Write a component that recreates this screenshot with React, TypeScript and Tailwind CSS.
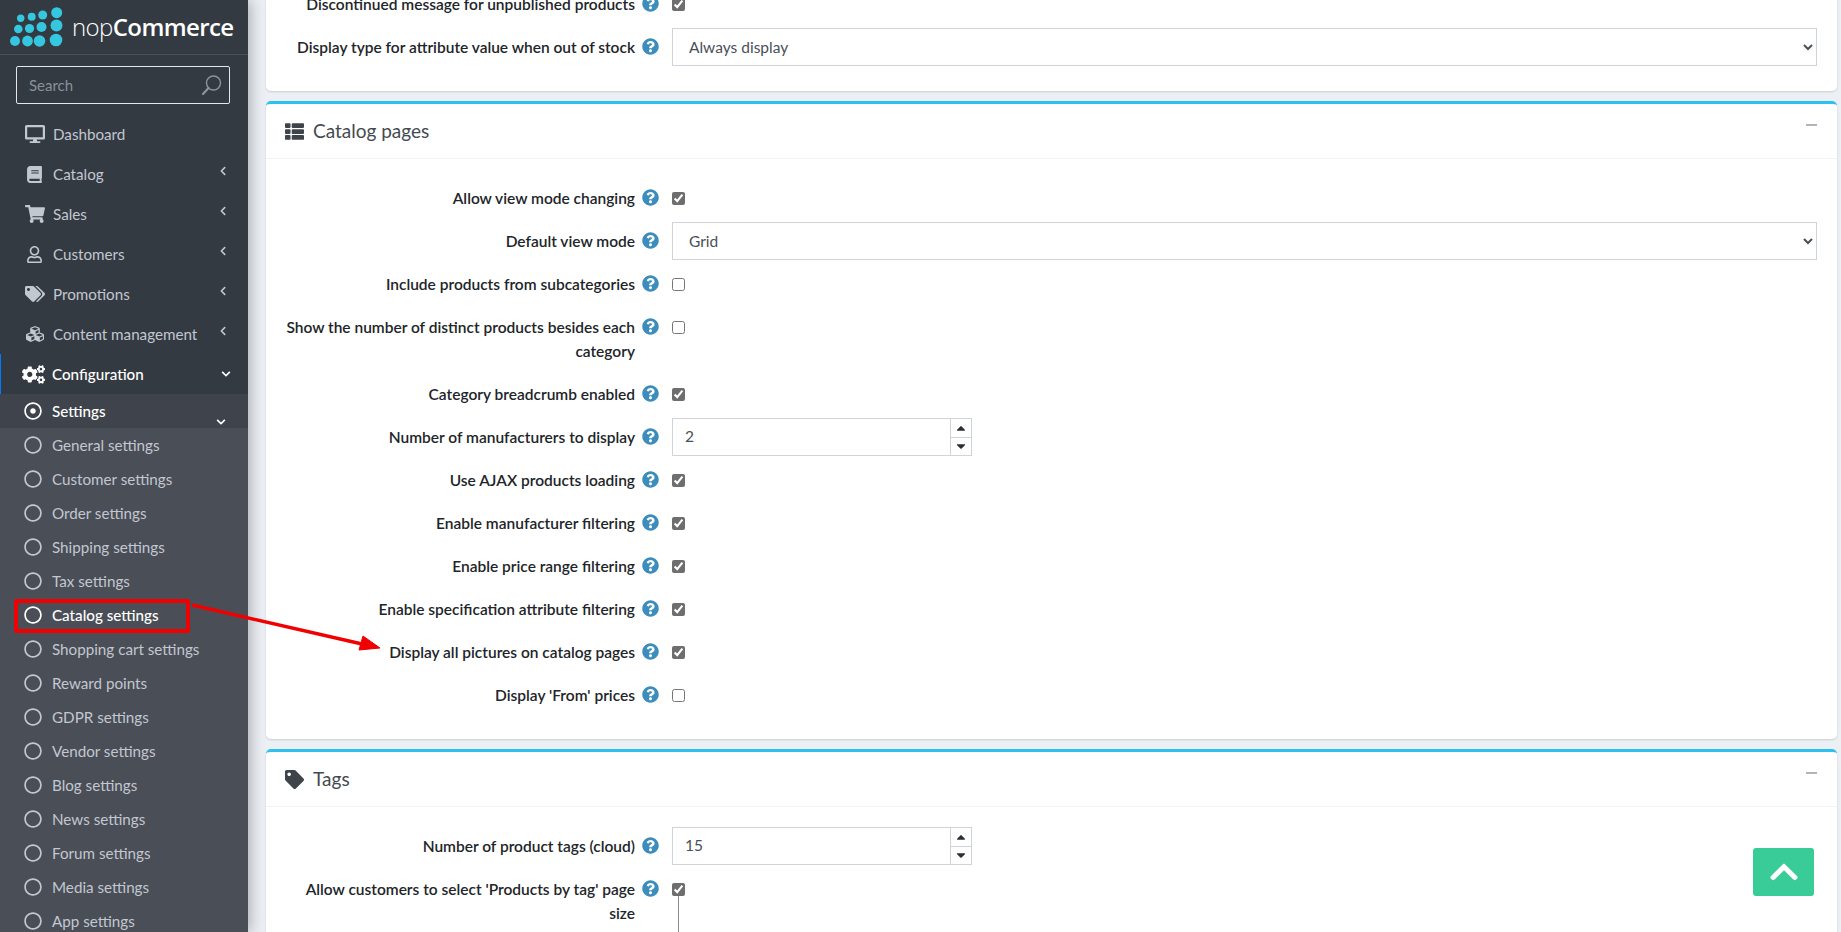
import { FaDesktop, FaBook, FaShoppingCart, FaRegUser, FaTags, FaCubes, FaCogs, FaRegDotCircle, FaRegCircle, FaThList, FaTag, FaQuestionCircle, FaChevronUp, FaChevronLeft, FaChevronDown, FaCaretUp, FaCaretDown } from "react-icons/fa";

const font = "font-['Lato','Noto_Sans',sans-serif]";

function Logo() {
  const dots: [number, number, number][] = [
    [20.7, 18.3, 3.7], [31.7, 16.7, 4], [42.7, 15, 4.5], [56.7, 12.7, 5.5],
    [18.3, 29, 4.3], [29.5, 28.5, 4.6], [41.5, 27, 5], [56.5, 25.5, 6],
    [15, 41, 5], [27.5, 41, 5.4], [39.5, 41, 5.8], [56, 40, 6.3],
  ];
  return (
    <div className="h-[55px] flex items-center border-b border-[#4b5057] relative">
      <svg width="64" height="55" viewBox="0 0 64 55" className="shrink-0">
        {dots.map((d, i) => <circle key={i} cx={d[0]} cy={d[1]} r={d[2]} fill="#35c6e0" />)}
      </svg>
      <span className="ml-[8px] text-[24px] leading-none text-white tracking-[-0.6px] font-['Open_Sans',sans-serif] font-light">nop<span className="font-semibold">Commerce</span></span>
    </div>
  );
}

function SearchBox() {
  return (
    <div className="ml-[16px] mr-[18px] mt-[11px] h-[38px] border border-[#e4e6e8] rounded-[2px] flex items-center pl-[12px] pr-[6px]">
      <span className="flex-1 text-[15px] text-[#8a9099]">Search</span>
      <svg width="22" height="22" viewBox="0 0 22 22" fill="none" stroke="#8f9499">
        <circle cx="12.5" cy="9" r="7" strokeWidth="1.4" />
        <path d="M7.5 14 L2 20" strokeWidth="2.2" strokeLinecap="round" />
      </svg>
    </div>
  );
}

function TopItem({ icon, label, arrow }: { icon: React.ReactNode; label: string; arrow?: boolean }) {
  return (
    <div className="h-[40px] flex items-center text-[#c2c7d0]">
      <span className="w-[53px] flex justify-center pl-[23px] pr-[7px] text-[20px] shrink-0">{icon}</span>
      <span className="flex-1 text-[15.2px]">{label}</span>
      {arrow && <FaChevronLeft className="text-[10px] mr-[20px] mb-[6px]" />}
    </div>
  );
}

const subs = ["General settings", "Customer settings", "Order settings", "Shipping settings", "Tax settings", "Catalog settings", "Shopping cart settings", "Reward points", "GDPR settings", "Vendor settings", "Blog settings", "News settings", "Forum settings", "Media settings", "App settings"];

function Sidebar() {
  return (
    <aside className={`w-[248px] shrink-0 h-[932px] overflow-hidden bg-[#343a42] relative z-10 shadow-[2px_0_14px_rgba(0,0,0,0.3)] ${font}`}>
      <Logo />
      <SearchBox />
      <div className="mt-[10px]">
        <TopItem icon={<FaDesktop />} label="Dashboard" />
        <TopItem icon={<FaBook className="text-[17px]" />} label="Catalog" arrow />
        <TopItem icon={<FaShoppingCart />} label="Sales" arrow />
        <TopItem icon={<FaRegUser className="text-[17px]" />} label="Customers" arrow />
        <TopItem icon={<FaTags />} label="Promotions" arrow />
        <TopItem icon={<FaCubes className="text-[18px]" />} label="Content management" arrow />
        <div className="h-[40px] flex items-center text-white border-l-[1px] border-[#007bff]">
          <span className="w-[51px] pl-[21px] text-[23px] shrink-0"><FaCogs /></span>
          <span className="flex-1 text-[15.2px] font-medium">Configuration</span>
          <FaChevronDown className="text-[10px] mr-[17px]" />
        </div>
        <div className="h-[34px] bg-[#3f444c] flex items-center text-white">
          <span className="w-[52px] pl-[24px] text-[18px] shrink-0"><FaRegDotCircle /></span>
          <span className="flex-1 text-[15.2px] font-medium">Settings</span>
          <FaChevronDown className="text-[10px] mr-[22px] mt-[22px]" />
        </div>
        <div className="bg-[#4a4e57]">
          {subs.map((s) => {
            const on = s === "Catalog settings";
            return (
              <div key={s} className={`h-[34px] flex items-center ${on ? "text-white font-medium" : "text-[#c2c7d0]"}`}>
                <span className="w-[52px] pl-[24px] text-[18px] shrink-0"><FaRegCircle /></span>
                <span className="text-[15.2px]">{s}</span>
              </div>
            );
          })}
        </div>
      </div>
    </aside>
  );
}

function Help() {
  return <FaQuestionCircle className="text-[#3d8dbc] text-[17px] shrink-0 mt-[3px]" />;
}

function Check({ on }: { on?: boolean }) {
  return <input type="checkbox" checked={!!on} readOnly className="w-[13px] h-[13px] mt-[6px] accent-[#6e6e6e] block" />;
}

function Row({ label, children }: { label: string; children: React.ReactNode }) {
  return (
    <div className="flex mb-[5px] min-h-[38px] pl-[15px]">
      <div className="w-[354px] pt-[7px] pb-[7px] text-right text-[15.5px] leading-[24px] font-semibold text-[#212529] shrink-0">{label}</div>
      <div className="w-[37px] pl-[7px] pt-[7px] shrink-0"><Help /></div>
      <div className="flex-1 pt-[7px] pr-[20px]">{children}</div>
    </div>
  );
}

function Select({ value }: { value: string }) {
  return (
    <select defaultValue={value} className="w-full h-[38px] -mt-[7px] block bg-white border border-[#ced4da] px-[12px] text-[15.5px] text-[#495057] rounded-none">
      <option>{value}</option>
    </select>
  );
}

function NumberBox({ value }: { value: string }) {
  return (
    <div className="w-[300px] h-[38px] -mt-[7px] border border-[#ced4da] flex text-[15.5px] text-[#495057]">
      <div className="flex-1 flex items-center pl-[12px]">{value}</div>
      <div className="w-[21px] border-l border-[#ced4da] flex flex-col text-[#2b2f33]">
        <div className="flex-1 flex items-center justify-center border-b border-[#ced4da]"><FaCaretUp className="text-[14px]" /></div>
        <div className="flex-1 flex items-center justify-center"><FaCaretDown className="text-[14px]" /></div>
      </div>
    </div>
  );
}

function CardHeader({ icon, title }: { icon: React.ReactNode; title: string }) {
  return (
    <div className="h-[55px] border-b border-[#f1f2f4] flex items-center pl-[19px] pr-[20px]">
      <span className="w-[28px] text-[19px] text-[#3f444a] shrink-0">{icon}</span>
      <span className="flex-1 text-[19px] text-[#444a50]">{title}</span>
      <span className="w-[11px] h-[2px] bg-[#b0b5bd] -mt-[12px]" />
    </div>
  );
}

function Card({ children, header }: { children: React.ReactNode; header?: React.ReactNode }) {
  return (
    <section className={`bg-white shadow-[0_1px_2px_rgba(0,0,0,0.15)] rounded-[5px] mb-[10px] ${header ? "border-t-[3px] border-[#2ec1ee]" : "rounded-t-none"}`}>
      {header}
      <div className={header ? "pt-[20px] pb-[20px]" : "pb-[20px]"}>{children}</div>
    </section>
  );
}

export default function App() {
  return (
    <div className={`h-[932px] w-[1841px] overflow-hidden flex bg-[#ecf0f5] relative ${font}`}>
      <Sidebar />
      <main className="flex-1 pl-[18px] pr-[4px] -mt-[15px] min-w-0">
        <Card>
          <Row label="Discontinued message for unpublished products"><Check on /></Row>
          <Row label="Display type for attribute value when out of stock"><Select value="Always display" /></Row>
        </Card>
        <Card header={<CardHeader icon={<FaThList />} title="Catalog pages" />}>
          <Row label="Allow view mode changing"><Check on /></Row>
          <Row label="Default view mode"><Select value="Grid" /></Row>
          <Row label="Include products from subcategories"><Check /></Row>
          <Row label="Show the number of distinct products besides each category"><Check /></Row>
          <Row label="Category breadcrumb enabled"><Check on /></Row>
          <Row label="Number of manufacturers to display"><NumberBox value="2" /></Row>
          <Row label="Use AJAX products loading"><Check on /></Row>
          <Row label="Enable manufacturer filtering"><Check on /></Row>
          <Row label="Enable price range filtering"><Check on /></Row>
          <Row label="Enable specification attribute filtering"><Check on /></Row>
          <Row label="Display all pictures on catalog pages"><Check on /></Row>
          <Row label="Display 'From' prices"><Check /></Row>
        </Card>
        <Card header={<CardHeader icon={<FaTag />} title="Tags" />}>
          <Row label="Number of product tags (cloud)"><NumberBox value="15" /></Row>
          <Row label="Allow customers to select 'Products by tag' page size">
            <Check on />
            <div className="ml-[6px] w-px h-[80px] bg-[#8a8a8a]" />
          </Row>
        </Card>
      </main>

      <div className="absolute left-[14px] top-[599px] w-[176px] h-[34px] border-[4px] border-[#f00000] rounded-[2px] z-20" />
      <svg className="absolute left-0 top-0 z-20 pointer-events-none" width="400" height="700">
        <path d="M192 605 L362 644" stroke="#f00000" strokeWidth="3.5" fill="none" />
        <path d="M380 648 L359 650 L363 636 Z" fill="#f00000" stroke="#f00000" strokeWidth="1" />
      </svg>

      <div className="absolute left-[1753px] top-[848px] w-[61px] h-[48px] rounded-[3px] bg-[#39cb98] flex items-center justify-center text-white z-20">
        <FaChevronUp className="text-[32px]" />
      </div>
    </div>
  );
}
